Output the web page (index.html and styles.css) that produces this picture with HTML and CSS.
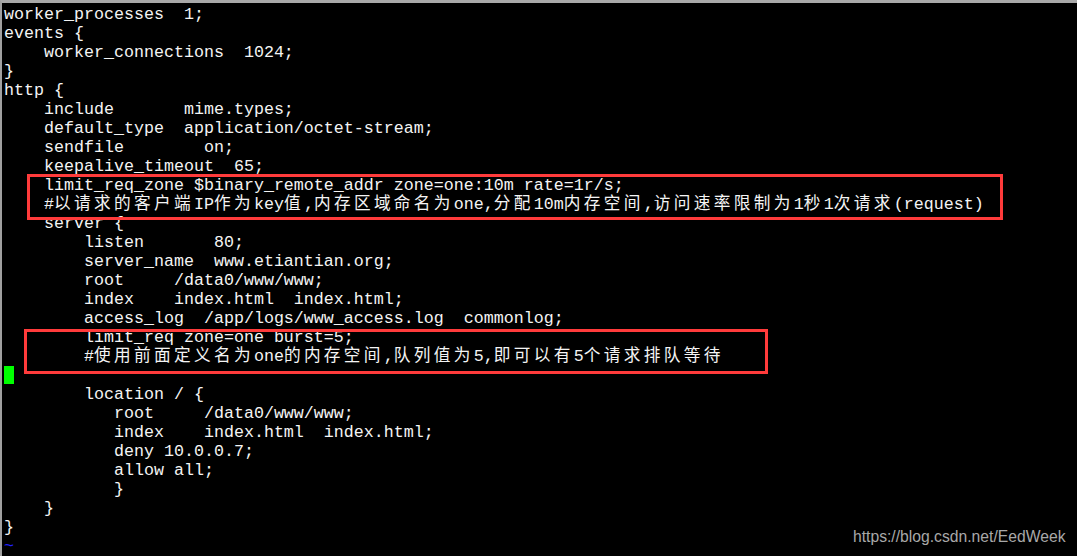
FILE: index.html
```html
<!DOCTYPE html>
<html>
<head>
<meta charset="utf-8">
<link rel="stylesheet" href="styles.css">
</head>
<body>
<div class="term">
<div class="ln">worker_processes  1;</div>
<div class="ln">events {</div>
<div class="ln">    worker_connections  1024;</div>
<div class="ln">}</div>
<div class="ln">http {</div>
<div class="ln">    include       mime.types;</div>
<div class="ln">    default_type  application/octet-stream;</div>
<div class="ln">    sendfile        on;</div>
<div class="ln">    keepalive_timeout  65;</div>
<div class="ln">    limit_req_zone $binary_remote_addr zone=one:10m rate=1r/s;</div>
<div class="ln">    #<span class="cj">以请求的客户端</span>IP<span class="cj">作为</span>key<span class="cj">值</span>,<span class="cj">内存区域命名为</span>one,<span class="cj">分配</span>10m<span class="cj">内存空间</span>,<span class="cj">访问速率限制为</span>1<span class="cj">秒</span>1<span class="cj">次请求</span>(request)</div>
<div class="ln">    server {</div>
<div class="ln">        listen       80;</div>
<div class="ln">        server_name  www.etiantian.org;</div>
<div class="ln">        root     /data0/www/www;</div>
<div class="ln">        index    index.html  index.html;</div>
<div class="ln">        access_log  /app/logs/www_access.log  commonlog;</div>
<div class="ln">        limit_req zone=one burst=5;</div>
<div class="ln">        #<span class="cj">使用前面定义名为</span>one<span class="cj">的内存空间</span>,<span class="cj">队列值为</span>5,<span class="cj">即可以有</span>5<span class="cj">个请求排队等待</span></div>
<div class="ln"><span class="cursor"></span></div>
<div class="ln">        location / {</div>
<div class="ln">           root     /data0/www/www;</div>
<div class="ln">           index    index.html  index.html;</div>
<div class="ln">           deny 10.0.0.7;</div>
<div class="ln">           allow all;</div>
<div class="ln">           }</div>
<div class="ln">    }</div>
<div class="ln">}</div>
<div class="ln tilde">~</div>
<div class="box box-a"></div>
<div class="box box-b"></div>
<div class="mark">https://blog.csdn.net/EedWeek</div>
</div>
</body>
</html>
```
FILE: styles.css
```css
html, body {
  margin: 0;
  padding: 0;
  background: #000;
  height: 100%;
  overflow: hidden;
}
.term {
  position: relative;
  height: 556px;
  box-sizing: border-box;
  border-top: 3px solid #a8a8a8;
  border-left: 2px solid #a0a0a0;
  padding: 2px 0 0 2px;
  background: #000;
  color: #f4f4f4;
  font-family: "Liberation Mono", monospace;
  font-size: 16.666px;
}
.ln {
  height: 19px;
  line-height: 19px;
  white-space: pre;
}
.cj {
  font-family: "Noto Sans CJK SC", sans-serif;
  font-size: 16.666px;
  letter-spacing: 3.334px;
  line-height: 0;
}
.cursor {
  display: inline-block;
  width: 10px;
  height: 18px;
  background: #00ff00;
  vertical-align: top;
}
.tilde {
  color: #2020ff;
}
.box {
  position: absolute;
  border: 3px solid #ff3b3b;
  box-sizing: border-box;
}
.box-a {
  left: 25px;
  top: 171px;
  width: 976px;
  height: 46px;
}
.box-b {
  left: 22px;
  top: 326px;
  width: 744px;
  height: 45px;
}
.mark {
  position: absolute;
  left: 851px;
  top: 524px;
  font-family: "Liberation Sans", Arial, sans-serif;
  font-size: 15.7px;
  color: #a8a8a8;
  line-height: 20px;
}
```
